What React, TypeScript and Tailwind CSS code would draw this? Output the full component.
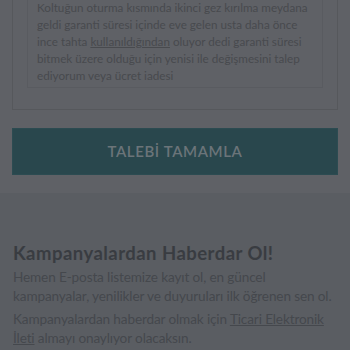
export default function App() {
  return (
    <div className="w-[350px] h-[350px] overflow-hidden bg-[#5a5d62]" style={{ fontFamily: 'Lato, "Noto Sans", sans-serif' }}>
      {/* Form section */}
      <div className="bg-[#5f6166] px-[12px] pb-[18px]">
        <div className="border-x border-b border-[#56585c] px-[14px] pb-[21px] -mt-[1px]">
          <div className="border-x border-b border-[#595b60] px-[9px] pb-[3px] -mt-[14px]">
            <p className="text-[11.7px] leading-[17px] text-[#484a4e] pt-[13px] whitespace-nowrap">
              Koltuğun oturma kısmında ikinci gez kırılma meydana
              <br />
              geldi garanti süresi içinde eve gelen usta daha önce
              <br />
              ince tahta <span className="underline">kullanıldığından</span> oluyor dedi garanti süresi
              <br />
              bitmek üzere olduğu için yenisi ile değişmesini talep
              <br />
              ediyorum veya ücret iadesi
            </p>
          </div>
        </div>
        <button className="mt-[18px] w-full h-[47px] bg-[#29474d] border border-[#2c4b51] text-[#6b7479] text-[15px] font-semibold tracking-[0.04em] flex items-center justify-center">
          TALEBİ TAMAMLA
        </button>
      </div>

      {/* Newsletter */}
      <div className="px-[13px] pt-[48px]">
        <h2 className="text-[18.5px] font-bold tracking-[0.025em] text-[#393c41] leading-[24px]">Kampanyalardan Haberdar Ol!</h2>
        <p className="mt-[3px] text-[13.6px] tracking-[-0.01em] leading-[19px] text-[#45484d]">
          Hemen E-posta listemize kayıt ol, en güncel kampanyalar, yenilikler ve duyuruları ilk öğrenen sen ol.
        </p>
        <p className="mt-[4px] text-[13.6px] tracking-[-0.01em] leading-[19px] text-[#45484d]">
          Kampanyalardan haberdar olmak için <span className="underline">Ticari Elektronik İleti</span> almayı onaylıyor olacaksın.
        </p>
      </div>
    </div>
  );
}
